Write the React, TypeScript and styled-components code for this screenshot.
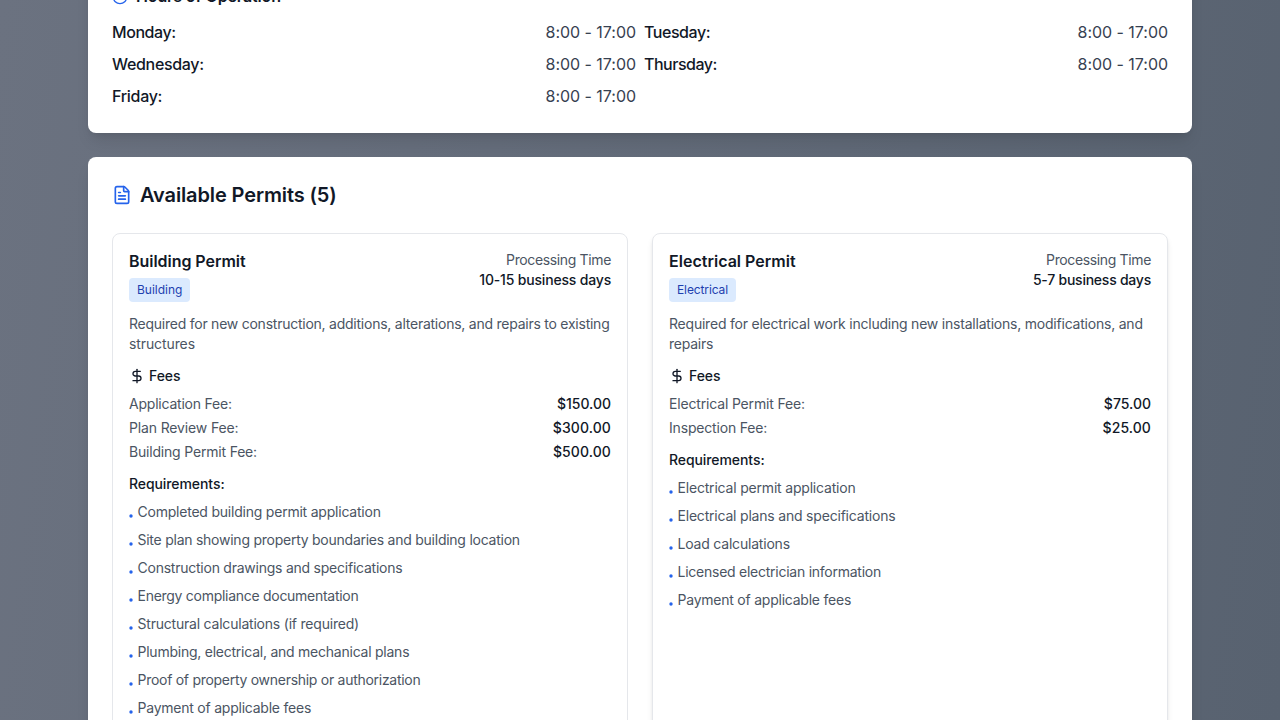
import React from "react";
import styled, { createGlobalStyle } from "styled-components";
import { Clock, DollarSign, FileText } from "lucide-react";

const GlobalStyle = createGlobalStyle`
  *, *::before, *::after { box-sizing: border-box; margin: 0; padding: 0; }
  html, body { height: 720px; overflow: hidden; }
  body {
    font-family: Inter, "Liberation Sans", sans-serif;
    font-size: 16px;
    line-height: 24px;
    color: #111827;
  }
`;

const Page = styled.main`
  height: 720px;
  overflow: hidden;
  padding: 0 88px;
  display: flex;
  flex-direction: column;
  gap: 24px;
  background: linear-gradient(97deg, #6b7280 0%, #586270 100%);
`;

const Panel = styled.section`
  flex: none;
  padding: 24px;
  border-radius: 8px;
  background: #fff;
  box-shadow: 0 10px 15px -3px rgba(0, 0, 0, 0.1), 0 4px 6px -4px rgba(0, 0, 0, 0.1);
`;

const HoursPanel = styled(Panel)`
  margin-top: -40px;
  padding-bottom: 25px;
`;

const HoursTitle = styled.h3`
  display: flex;
  align-items: center;
  gap: 8px;
  margin-bottom: 12px;
  font-size: 16px;
  font-weight: 600;
  line-height: 24px;
  svg { color: #2563eb; margin-top: 2px; }
`;

const HoursGrid = styled.div`
  display: grid;
  grid-template-columns: repeat(2, minmax(0, 1fr));
  gap: 8px;
`;

const Row = styled.div`
  display: flex;
  justify-content: space-between;
`;

const Text = styled.span<{ $track?: number }>`
  letter-spacing: ${(p) => p.$track ?? 0}px;
  white-space: nowrap;
`;

const Day = styled(Text)`
  font-weight: 500;
`;

const Time = styled(Text)`
  color: #374151;
`;

const PermitsTitle = styled.h2`
  display: flex;
  align-items: center;
  gap: 8px;
  margin-bottom: 24px;
  font-size: 20px;
  font-weight: 600;
  line-height: 28px;
  svg { color: #2563eb; }
`;

const PermitGrid = styled.div`
  display: grid;
  grid-template-columns: repeat(2, minmax(0, 1fr));
  gap: 24px;
`;

const PermitCard = styled.article<{ $raised?: boolean }>`
  padding: 16px;
  border: 1px solid #e5e7eb;
  border-radius: 8px;
  box-shadow: ${(p) =>
    p.$raised ? "0 4px 6px -1px rgba(0, 0, 0, 0.1), 0 2px 4px -2px rgba(0, 0, 0, 0.1)" : "none"};
  font-size: 14px;
  line-height: 20px;
  color: #4b5563;
`;

const CardHead = styled.header`
  display: flex;
  justify-content: space-between;
  align-items: flex-start;
  margin-bottom: 12px;
`;

const NameBlock = styled.div`
  display: flex;
  flex-direction: column;
  align-items: flex-start;
`;

const PermitName = styled.h3`
  font-size: 16px;
  font-weight: 600;
  line-height: 22px;
  color: #111827;
  margin-bottom: 6px;
`;

const Tag = styled.span`
  padding: 4px 8px;
  border-radius: 4px;
  background: #dbeafe;
  color: #1e40af;
  font-size: 12px;
  line-height: 16px;
`;

const Processing = styled.div`
  display: flex;
  flex-direction: column;
  align-items: flex-end;
`;

const Strong = styled(Text)`
  font-weight: 500;
  color: #111827;
`;

const Description = styled.p`
  margin-bottom: 12px;
`;

const Line = styled(Text)`
  display: block;
`;

const SubTitle = styled.h4`
  display: flex;
  align-items: center;
  gap: 4px;
  margin-bottom: 8px;
  font-size: 14px;
  font-weight: 500;
  line-height: 20px;
  color: #111827;
`;

const FeeList = styled.div`
  display: flex;
  flex-direction: column;
  gap: 4px;
  margin-bottom: 12px;
`;

const Requirements = styled.ul`
  list-style: none;
  display: flex;
  flex-direction: column;
  gap: 8px;
`;

const Requirement = styled.li`
  display: flex;
  align-items: flex-start;
  gap: 4.5px;
`;

const Dot = styled.i`
  width: 4px;
  height: 4px;
  margin-top: 12px;
  border-radius: 50%;
  background: #2563eb;
  transform: scale(0.85);
`;

type Item = [text: string, track?: number];

interface Permit {
  name: Item;
  tag: Item;
  time: Item;
  description: Item[];
  fees: { label: Item; amount: Item }[];
  requirements: Item[];
  raised?: boolean;
}

const hours: { day: Item; time: Item }[] = [
  { day: ["Monday:", -0.43], time: ["8:00 - 17:00", -0.04] },
  { day: ["Tuesday:", -0.45], time: ["8:00 - 17:00", -0.04] },
  { day: ["Wednesday:", -0.32], time: ["8:00 - 17:00", -0.04] },
  { day: ["Thursday:", -0.5], time: ["8:00 - 17:00", -0.04] },
  { day: ["Friday:", -0.3], time: ["8:00 - 17:00", -0.04] },
];

const permits: Permit[] = [
  {
    name: ["Building Permit", -0.04],
    tag: ["Building"],
    time: ["10-15 business days", -0.18],
    description: [
      ["Required for new construction, additions, alterations, and repairs to existing", -0.244],
      ["structures", -0.1],
    ],
    fees: [
      { label: ["Application Fee:", -0.22], amount: ["$150.00"] },
      { label: ["Plan Review Fee:", -0.14], amount: ["$300.00", 0.1] },
      { label: ["Building Permit Fee:", -0.19], amount: ["$500.00", 0.1] },
    ],
    requirements: [
      ["Completed building permit application", -0.22],
      ["Site plan showing property boundaries and building location", -0.25],
      ["Construction drawings and specifications", -0.24],
      ["Energy compliance documentation", -0.28],
      ["Structural calculations (if required)", -0.21],
      ["Plumbing, electrical, and mechanical plans", -0.24],
      ["Proof of property ownership or authorization", -0.28],
      ["Payment of applicable fees", -0.23],
    ],
  },
  {
    name: ["Electrical Permit", 0.02],
    tag: ["Electrical", -0.12],
    time: ["5-7 business days", -0.235],
    description: [
      ["Required for electrical work including new installations, modifications, and", -0.217],
      ["repairs", -0.25],
    ],
    fees: [
      { label: ["Electrical Permit Fee:", -0.17], amount: ["$75.00"] },
      { label: ["Inspection Fee:", -0.18], amount: ["$25.00", 0.08] },
    ],
    requirements: [
      ["Electrical permit application", -0.19],
      ["Electrical plans and specifications", -0.2],
      ["Load calculations", -0.2],
      ["Licensed electrician information", -0.25],
      ["Payment of applicable fees", -0.23],
    ],
    raised: true,
  },
];

function PermitItem({ permit }: { permit: Permit }) {
  return (
    <PermitCard $raised={permit.raised}>
      <CardHead>
        <NameBlock>
          <PermitName><Text $track={permit.name[1]}>{permit.name[0]}</Text></PermitName>
          <Tag><Text $track={permit.tag[1]}>{permit.tag[0]}</Text></Tag>
        </NameBlock>
        <Processing>
          <Text $track={-0.36}>Processing Time</Text>
          <Strong $track={permit.time[1]}>{permit.time[0]}</Strong>
        </Processing>
      </CardHead>
      <Description>
        {permit.description.map(([t, track]) => <Line key={t} $track={track}>{t}</Line>)}
      </Description>
      <SubTitle><DollarSign size={16} /><Text $track={-0.1}>Fees</Text></SubTitle>
      <FeeList>
        {permit.fees.map(({ label, amount }) => (
          <Row key={label[0]}>
            <Text $track={label[1]}>{label[0]}</Text>
            <Strong $track={amount[1]}>{amount[0]}</Strong>
          </Row>
        ))}
      </FeeList>
      <SubTitle><Text $track={-0.08}>Requirements:</Text></SubTitle>
      <Requirements>
        {permit.requirements.map(([t, track]) => (
          <Requirement key={t}><Dot /><Text $track={track}>{t}</Text></Requirement>
        ))}
      </Requirements>
    </PermitCard>
  );
}

export default function App() {
  return (
    <>
      <GlobalStyle />
      <Page>
        <HoursPanel>
          <HoursTitle><Clock size={16} /><Text $track={-0.13}>Hours of Operation</Text></HoursTitle>
          <HoursGrid>
            {hours.map(({ day, time }) => (
              <Row key={day[0]}>
                <Day $track={day[1]}>{day[0]}</Day>
                <Time $track={time[1]}>{time[0]}</Time>
              </Row>
            ))}
          </HoursGrid>
        </HoursPanel>
        <Panel>
          <PermitsTitle><FileText size={20} /><Text $track={-0.12}>Available Permits (5)</Text></PermitsTitle>
          <PermitGrid>
            {permits.map((p) => <PermitItem key={p.name[0]} permit={p} />)}
          </PermitGrid>
        </Panel>
      </Page>
    </>
  );
}
